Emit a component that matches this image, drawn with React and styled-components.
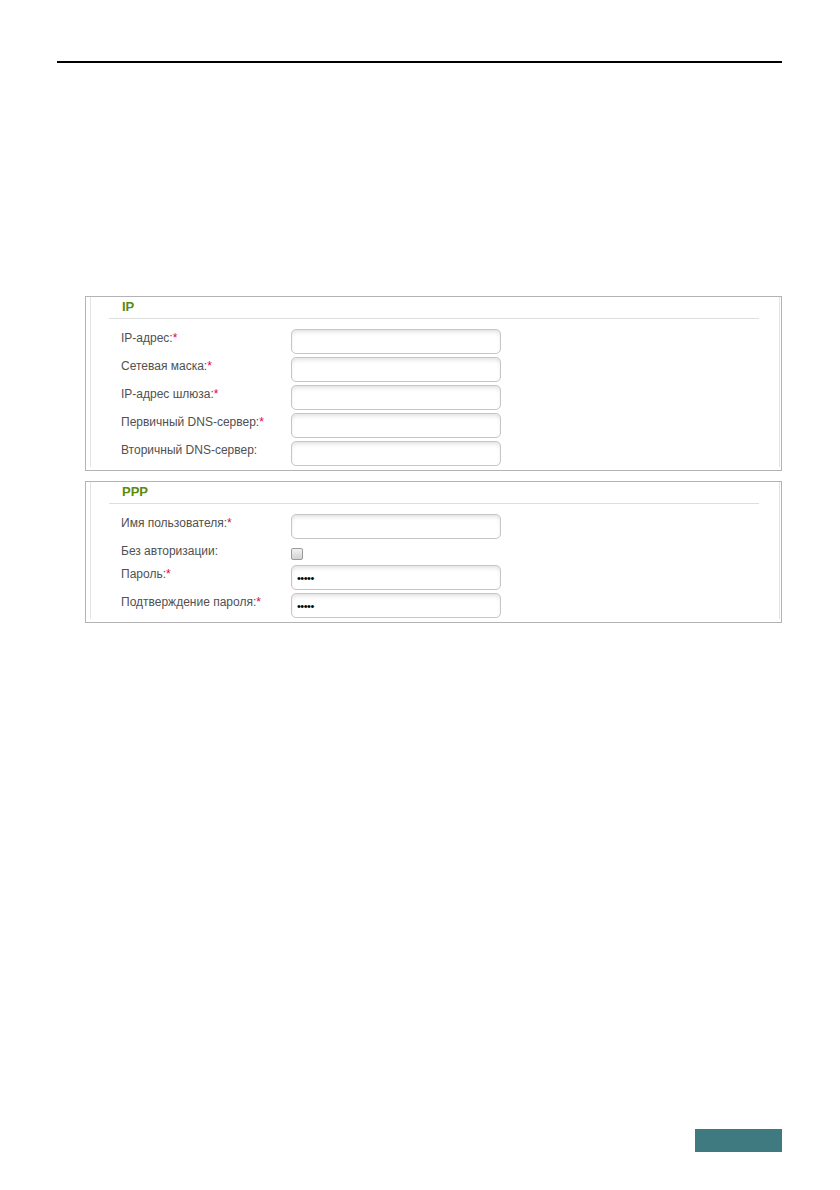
import React from 'react';
import styled, { createGlobalStyle } from 'styled-components';

const GlobalStyle = createGlobalStyle`
  html, body {
    margin: 0;
    padding: 0;
    background: #ffffff;
  }
  body {
    font-family: 'Liberation Sans', Arial, sans-serif;
  }
`;

const Page = styled.div`
  width: 840px;
  height: 1190px;
  display: flex;
  flex-direction: column;
  box-sizing: border-box;
  padding: 61px 58px 38px 57px;
`;

const HeaderRule = styled.div`
  height: 0;
  border-bottom: 2px solid #000;
`;

const Content = styled.div`
  display: flex;
  flex-direction: column;
  gap: 10px;
  margin-top: 233px;
  padding-left: 28px;
`;

const Box = styled.div`
  border: 1px solid #b3b3b3;
  padding: 0 1px 3px 4px;
`;

const Inner = styled.div`
  border-left: 1px solid #e3e3e3;
  border-right: 1px solid #e3e3e3;
  padding-bottom: 1px;
`;

const Heading = styled.div`
  margin: 0 20px 0 18px;
  height: 21px;
  line-height: 20px;
  padding-left: 13px;
  border-bottom: 1px solid #dedede;
  font-size: 13px;
  font-weight: 700;
  color: #5b8a0c;
`;

const Rows = styled.div`
  display: flex;
  flex-direction: column;
  gap: 3px;
  margin-top: 10px;
  padding-left: 30px;
`;

const Row = styled.div`
  display: flex;
  align-items: flex-start;
  height: ${(p) => (p.$short ? '20px' : '25px')};
`;

const Label = styled.div`
  width: 170px;
  flex: none;
  font-size: 12px;
  line-height: 15px;
  color: #505050;
  padding-top: 2px;
`;

const Star = styled.span`
  color: #e2004d;
`;

const Field = styled.input`
  box-sizing: border-box;
  width: 210px;
  height: 25px;
  margin: 0;
  padding: 0 5px;
  border: 1px solid #c6c6c6;
  border-radius: 5px;
  background: #fff;
  box-shadow: inset 0 3px 4px -1px rgba(0, 0, 0, 0.12);
  font-family: 'Liberation Sans', Arial, sans-serif;
  font-size: 11px;
  color: #000;
  letter-spacing: -0.5px;
  outline: none;
`;

const Check = styled.span`
  display: block;
  width: 12px;
  height: 12px;
  box-sizing: border-box;
  margin-top: 6px;
  border: 1px solid #9a9a9a;
  border-radius: 2px;
  background: linear-gradient(#f2f2f2, #d2d2d2);
`;

const Footer = styled.div`
  margin-top: auto;
  align-self: flex-end;
  width: 87px;
  height: 23px;
  background: #3e7a80;
`;

const ipRows = [
  { label: 'IP-адрес:', req: true },
  { label: 'Сетевая маска:', req: true },
  { label: 'IP-адрес шлюза:', req: true },
  { label: 'Первичный DNS-сервер:', req: true },
  { label: 'Вторичный DNS-сервер:', req: false },
];

const FieldRow = ({ label, req, value }) => (
  <Row>
    <Label>
      {label}
      {req && <Star>*</Star>}
    </Label>
    <Field type="text" readOnly value={value || ''} />
  </Row>
);

const App = () => {
  return (
    <Page>
      <GlobalStyle />
      <HeaderRule />
      <Content>
        <Box>
          <Inner>
            <Heading>IP</Heading>
            <Rows>
              {ipRows.map((r) => (
                <FieldRow key={r.label} label={r.label} req={r.req} />
              ))}
            </Rows>
          </Inner>
        </Box>
        <Box>
          <Inner>
            <Heading>PPP</Heading>
            <Rows>
              <FieldRow label="Имя пользователя:" req />
              <Row $short>
                <Label>Без авторизации:</Label>
                <Check />
              </Row>
              <FieldRow label="Пароль:" req value="•••••" />
              <FieldRow label="Подтверждение пароля:" req value="•••••" />
            </Rows>
          </Inner>
        </Box>
      </Content>
      <Footer />
    </Page>
  );
};

export default App;
